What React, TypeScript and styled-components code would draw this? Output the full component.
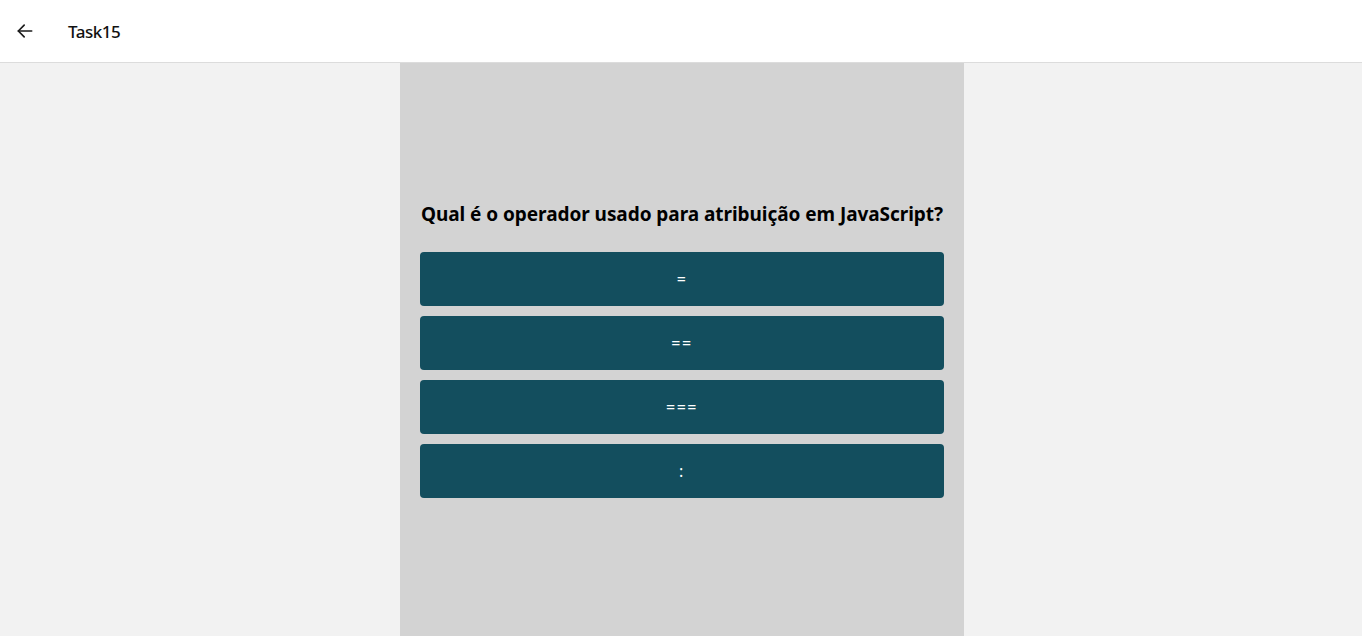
import React from 'react';
import styled, { createGlobalStyle } from 'styled-components';

const GlobalStyle = createGlobalStyle`
    html, body {
        margin: 0;
        padding: 0;
        height: 100%;
        background: #f2f2f2;
        font-family: "Noto Sans", "Open Sans", sans-serif;
    }
    #root {
        height: 100%;
    }
`;

const Page = styled.div`
    height: 100vh;
    display: flex;
    flex-direction: column;
    overflow: hidden;
`;

const Header = styled.header`
    height: 62px;
    flex-shrink: 0;
    display: flex;
    align-items: center;
    background: #ffffff;
    border-bottom: 1px solid #dcdcdc;
    padding-left: 14px;
`;

const BackButton = styled.button`
    width: 22px;
    height: 22px;
    padding: 0;
    border: none;
    background: none;
    display: flex;
    align-items: center;
    justify-content: center;
    color: #1a1a1a;
    cursor: pointer;
`;

const Title = styled.h1`
    margin: 0 0 0 32px;
    font-size: 17px;
    font-weight: 500;
    color: #111;
    letter-spacing: -0.5px;
`;

const Main = styled.main`
    flex: 1;
    display: flex;
    justify-content: center;
    padding-left: 2px;
`;

const Panel = styled.section`
    width: 564px;
    background: #d3d3d3;
    display: flex;
    flex-direction: column;
    justify-content: center;
    padding: 0 20px;
    box-sizing: border-box;
`;

const Question = styled.h2`
    margin: 0 0 25px;
    text-align: center;
    font-size: 19px;
    font-weight: 700;
    color: #000;
    letter-spacing: -0.05px;
`;

const Options = styled.div`
    display: flex;
    flex-direction: column;
    gap: 10px;
`;

const Option = styled.button`
    height: 54px;
    border: none;
    border-radius: 4px;
    background: #134e5e;
    color: #ffffff;
    font-family: inherit;
    font-size: 16px;
    letter-spacing: 1.5px;
    cursor: pointer;
`;

const options = ['=', '==', '===', ':'];

const App: React.FC = () => {
    return (
        <>
            <GlobalStyle />
            <Page>
                <Header>
                    <BackButton aria-label="Voltar">
                        <svg width="20" height="20" viewBox="0 0 24 24" fill="none" stroke="currentColor" strokeWidth="2" strokeLinecap="round" strokeLinejoin="round">
                            <path d="M20 12H4" />
                            <path d="M11 5l-7 7 7 7" />
                        </svg>
                    </BackButton>
                    <Title>Task15</Title>
                </Header>
                <Main>
                    <Panel>
                        <Question>Qual é o operador usado para atribuição em JavaScript?</Question>
                        <Options>
                            {options.map((option) => (
                                <Option key={option}>{option}</Option>
                            ))}
                        </Options>
                    </Panel>
                </Main>
            </Page>
        </>
    );
};

export default App;
